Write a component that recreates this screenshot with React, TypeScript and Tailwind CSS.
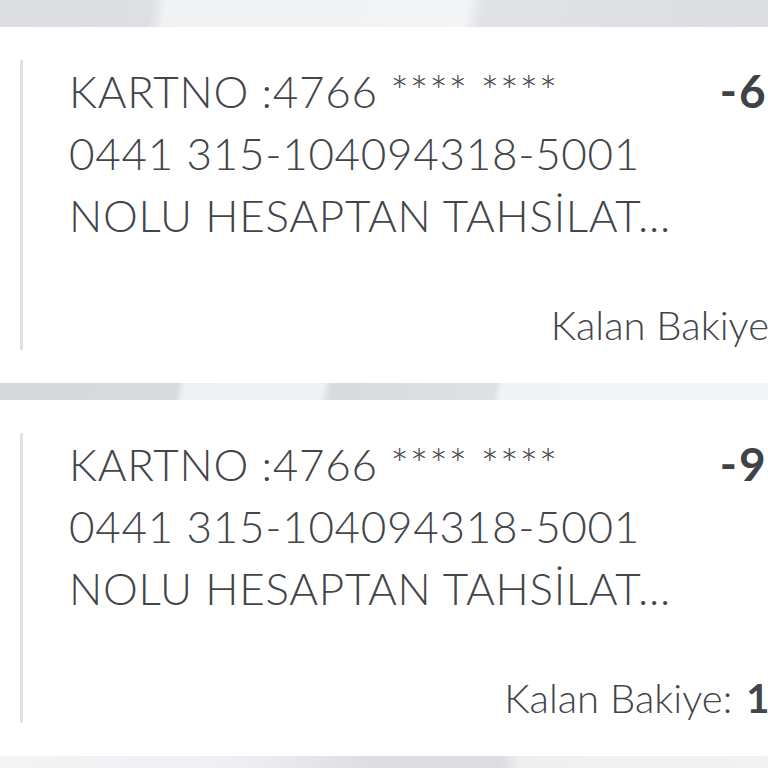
import React from 'react'

interface Txn {
  lines: string[]
  amount: string
  balance: string
}

const txns: Txn[] = [
  {
    lines: ['KARTNO :4766 **** ****', '0441 315-104094318-5001', 'NOLU HESAPTAN TAHSİLAT...'],
    amount: '-6.250,00 TL',
    balance: '8.412,35 TL',
  },
  {
    lines: ['KARTNO :4766 **** ****', '0441 315-104094318-5001', 'NOLU HESAPTAN TAHSİLAT...'],
    amount: '-9.180,00 TL',
    balance: '112.412,35 TL',
  },
]

const TxnCard: React.FC<{ t: Txn }> = ({ t }) => (
  <div className="bg-white pl-[20px] py-[33px]">
    <div className="flex border-l-[3px] border-[#e2e2e4] pl-[46px] pr-[30px]">
      <div className="flex flex-1 flex-col">
        <div className="flex items-start justify-between">
          <div className="flex flex-col text-[44px] leading-[62px] font-light tracking-[0.7px] text-[#42454a]">
            {t.lines.map((l, i) => (
              <span key={i} className="whitespace-nowrap">{l}</span>
            ))}
          </div>
          <span className="whitespace-nowrap text-[46px] leading-[62px] font-bold tracking-[2px] text-[#3f4247]">
            {t.amount}
          </span>
        </div>
        <div className="mt-[54px] flex justify-end whitespace-nowrap text-[40px] leading-[50px] text-[#42454a]">
          <span className="font-light">Kalan Bakiye:</span>
          <span className="ml-[14px] font-bold">{t.balance}</span>
        </div>
      </div>
    </div>
  </div>
)

export default function App() {
  return (
    <div className="h-[768px] w-[768px] overflow-hidden bg-[#eceef0] font-['Lato','Noto_Sans',sans-serif]">
      <div className="flex w-[1034px] flex-col">
        <div className="h-[27px] bg-[linear-gradient(100deg,#dcdde0_0px,#dedfe2_150px,#f1f2f4_165px,#f3f4f6_460px,#e1e2e5_478px,#dcdde0_760px,#e6e7ea_1040px)]" />
        <TxnCard t={txns[0]} />
        <div className="h-[17px] bg-[linear-gradient(100deg,#d7d8da_0px,#d9dadc_175px,#eff0f2_182px,#f0f1f3_318px,#d9dadc_328px,#dfe0e2_488px,#f2f3f5_495px,#f5f6f8_1040px)]" />
        <TxnCard t={txns[1]} />
        <div className="h-[20px] bg-[linear-gradient(90deg,#f3f4f6_0px,#eeeff2_240px,#dcdde0_380px,#dcdde0_500px,#eeeff1_520px,#f4f5f7_1040px)]" />
      </div>
    </div>
  )
}
